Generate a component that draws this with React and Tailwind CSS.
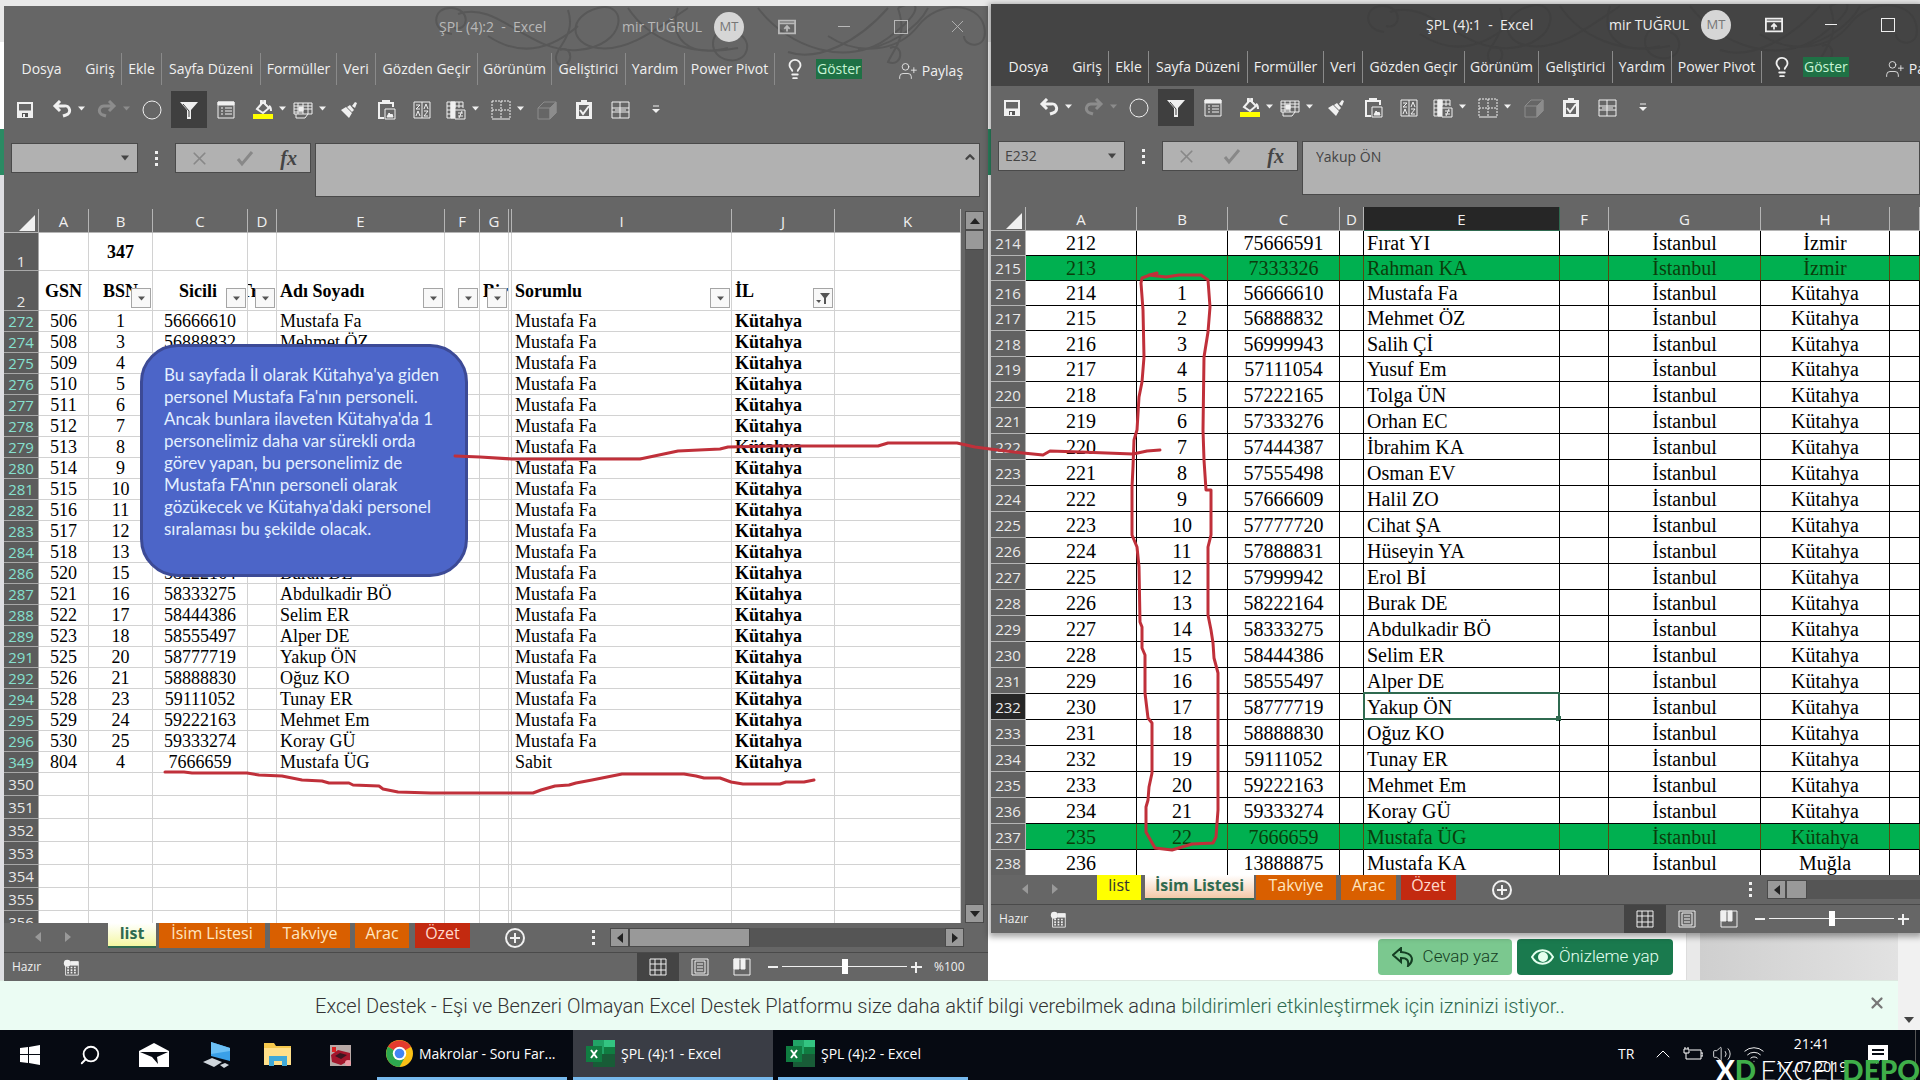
import React, { useState } from "react";
import { ChevronUp, Lightbulb, Search, UserPlus, Volume2, Wifi, X } from "lucide-react";

const MENU = [
  { label: "Dosya", cls: "w-[75px]" },
  { label: "Giriş", cls: "w-[43px] border-r" },
  { label: "Ekle", cls: "w-10 border-r" },
  { label: "Sayfa Düzeni", cls: "w-[99px] border-r" },
  { label: "Formüller", cls: "w-[76px] border-r" },
  { label: "Veri", cls: "w-[39px] border-r" },
  { label: "Gözden Geçir", cls: "w-[102px] border-r" },
  { label: "Görünüm", cls: "w-[74px] border-r" },
  { label: "Geliştirici", cls: "w-[74px] border-r" },
  { label: "Yardım", cls: "w-[59px] border-r" },
  { label: "Power Pivot", cls: "w-[90px] border-r" },
];

const TOOLS = [
  { name: "Kaydet", icon: "save", cls: "w-9" },
  { name: "Geri Al", icon: "undo", cls: "w-8 ml-[3px]", more: true },
  { name: "Yinele", icon: "redo", cls: "w-8 ml-[5px]", more: true, dim: true },
  { name: "Daire", icon: "circle", cls: "w-9 ml-[3px]" },
  { name: "Filtre", icon: "filter", cls: "w-9 ml-px bg-[#3f3f3f]" },
  { name: "Form", icon: "list", cls: "w-9 ml-px" },
  { name: "Dolgu Rengi", icon: "bucket", cls: "w-8 ml-[3px]", more: true },
  { name: "Tablo", icon: "table", cls: "w-8", more: true },
  { name: "Biçim Boyacısı", icon: "brush", cls: "w-9 ml-1" },
  { name: "Yapıştır", icon: "paste", cls: "w-9 ml-px" },
  { name: "Sırala", icon: "sort", cls: "w-9" },
  { name: "Koşullu Biçim", icon: "pivot", cls: "w-8", more: true },
  { name: "Kenarlıklar", icon: "borders", cls: "w-8 ml-[5px]", more: true },
  { name: "Küp", icon: "cube", cls: "w-9 ml-1", dim: true },
  { name: "Denetle", icon: "check", cls: "w-9 ml-px" },
  { name: "Hücreler", icon: "grid", cls: "w-9" },
  { name: "Özelleştir", icon: "custom", cls: "w-9" },
];

const ICONS = {
  save: (
    <>
      <path d="M3 3h14v14H3z" strokeWidth="2" />
      <path d="M3 11h14v6H3z" fill="currentColor" />
      <path d="M7 13h6v4H7z" fill="#555" stroke="none" />
      <path d="M8 14h2v3H8z" fill="currentColor" stroke="none" />
    </>
  ),
  undo: <path d="M4 6h8a4.500 4.500 0 0 1 2 9l-3 1M8 1 3 6l5 5" strokeWidth="3" />,
  redo: <path d="M16 6H8a4.500 4.500 0 0 0-2 9l3 1M12 1l5 5-5 5" strokeWidth="3" />,
  circle: <circle cx="10" cy="10" r="9" />,
  filter: (
    <>
      <path d="M1 2h18l-7 8v9H8v-9z" fill="currentColor" stroke="none" />
      <path d="m4 4 6 7v6" stroke="#3f3f3f" />
    </>
  ),
  list: (
    <>
      <path d="M2 2h16v16H2z" />
      <path d="M2 2h16v3H2z" fill="currentColor" />
      <path d="M5 8h2m2 0h7M5 11h2m2 0h7M5 14h2m2 0h7" />
    </>
  ),
  bucket: (
    <>
      <path d="M4 9 10 2l6 6-6 5zM8 5V1c0-2 4-2 4 0v4" strokeWidth="2" />
      <path d="M16 6c2 1 2 3 2 5" strokeWidth="2" />
      <path d="M0 14h20v5H0z" fill="#ffff00" stroke="none" />
    </>
  ),
  table: (
    <>
      <path d="M1 3h18v11H1zM1 6h18M1 9h18M1 12h9M5 3v11M10 3v11M15 3v11" />
      <path d="M6 7h4v4H6z" fill="currentColor" />
      <path d="M3 14v4h9l3-4" />
    </>
  ),
  brush: (
    <path d="m2 10 5-3 6 6-3 5zM8 7l3-2 4 5-2 2M13 6l3-4 2 1-2 5z" fill="currentColor" stroke="none" />
  ),
  paste: (
    <>
      <path d="M8 18H3V3h14v4M7 3V1h6v2" strokeWidth="2" />
      <path d="M9 9h10v10H9z" />
      <path d="m11 17 2-4 2 2 1-1 1 3z" fill="currentColor" />
    </>
  ),
  sort: (
    <>
      <path d="M2 2h16v16H2zM10 2v16" />
      <path d="M4 5h4L4 9h4M4 16l2-5 2 5M12 9l2-5 2 5M12 11h4l-4 5h4" />
    </>
  ),
  pivot: (
    <>
      <path d="M1 2h16v6M1 2v16h7M1 6h16M1 10h7M1 14h7M5 2v16M9 2v6M13 2v6" />
      <path d="M5 2h4v16H5z" fill="currentColor" />
      <path d="M9 10h10v9H9z" fill="#666" />
      <path d="M12 13h5M12 16h5M16 11l-3 7" />
    </>
  ),
  borders: (
    <>
      <path d="M1 1h18v17M1 1v17M10 1v17M1 10h18" strokeDasharray="2 1" />
      <path d="M1 19h18" />
    </>
  ),
  cube: (
    <>
      <path d="M1 8h12v11H1zM1 8l6-6h12l-6 6M19 2v11l-6 6" />
      <path d="M13 8l6-6v11l-6 6z" fill="currentColor" />
    </>
  ),
  check: (
    <>
      <path d="M2 2h16v17H2z" fill="currentColor" stroke="none" />
      <path d="M5 5h10v11H5z" fill="#666" stroke="none" />
      <path d="M7 0h6v4H7z" fill="currentColor" stroke="none" />
      <path d="m6 10 3 4 6-8" strokeWidth="2" />
    </>
  ),
  grid: <path d="M2 2h17v16H2zM2 8h17M2 12h17M10 2v16M5 10h11" />,
  custom: (
    <>
      <path d="M7 6h6" strokeWidth="1" />
      <path d="M6 9h8l-4 4z" fill="currentColor" stroke="none" />
    </>
  ),
  normal: <path d="M2 2h16v16H2zM2 7h16M2 13h16M7 2v16M13 2v16" />,
  page: <path d="M2 2h16v16H2zM5 4h10v12H5zM7 7h6M7 10h6M7 13h6" />,
  breaks: (
    <>
      <path d="M2 2h16v16H2z" />
      <path d="M2 2h5v10H2zM9 2h4v10H9z" fill="currentColor" />
    </>
  ),
  ribbon: (
    <>
      <path d="M1 3h18v14H1zM1 6h18M10 15V9M7 12l3-3 3 3" strokeWidth="2" />
    </>
  ),
  macro: (
    <>
      <path d="M3 7h15v12H3z" />
      <path d="M9 3h9v4H9z" fill="currentColor" />
      <path d="M5 10h11M5 13h11M5 16h11" strokeDasharray="2 2" strokeWidth="2" />
      <circle cx="5" cy="5" r="4" fill="currentColor" stroke="none" />
    </>
  ),
};

const Icon = ({ name, size = 20 }) => (
  <svg
    width={size}
    height={size}
    viewBox="0 0 20 20"
    fill="none"
    stroke="currentColor"
    aria-hidden="true"
    className="shrink-0"
  >
    {ICONS[name]}
  </svg>
);

const Triangle = ({ dir = "down", className = "" }) => {
  const paths = {
    down: "M0 2h10L5 8z",
    up: "M0 8h10L5 2z",
    left: "M8 0v10L2 5z",
    right: "M2 0v10l6-5z",
  };
  return (
    <svg viewBox="0 0 10 10" fill="currentColor" className={`shrink-0 ${className}`} aria-hidden="true">
      <path d={paths[dir]} />
    </svg>
  );
};

const Swirls = ({ active }) => (
  <svg
    width="560"
    height="62"
    viewBox="0 0 560 62"
    fill="none"
    strokeWidth="2"
    className={`absolute right-0 top-0 ${active ? "stroke-[#404040]" : "stroke-[#585858]"}`}
    aria-hidden="true"
  >
    <path d="M24 28c-22-2-20-28 0-26s16 24 2 20M30 8c40-14 70 40 120 36s50-50 20-42-30 36 0 40 60-20 90-40" />
    <path d="M60 30c30 20 60 16 90-10M140 4c10 30-20 40-10 54 16 6 16-20 2-14M200 2c20 30 60 50 110 40M250 2c-10 30 10 50 50 40" />
    <path d="M300 20c-20 6-20 30 0 34s26-20 10-26M330 2c30 40 90 60 130 30s30-40 10-30M360 46c30 10 70-10 100-44" />
    <path d="M400 30c30 20 70 16 90-10s60-24 66 0-20 22-20 10M470 2c10 30-4 40-10 54 16 6 16-20 2-14M500 2c-10 20-40 40-70 42" />
  </svg>
);

const ScrollButton = ({ dir }) => (
  <button
    type="button"
    aria-label={`Kaydır ${dir}`}
    className="flex size-[19px] shrink-0 items-center justify-center border border-[#4a4a4a] bg-[#999] text-[#222]"
  >
    <Triangle dir={dir} className="size-[10px]" />
  </button>
);

const ExcelWindow = ({
  title,
  active,
  className,
  cell,
  formula,
  tabs,
  tabsPad,
  gapAfterTabs,
  gapBeforeScroll,
  vertical,
  thumb,
  tailPad,
  zoomed,
  children,
}) => {
  const [zoom, setZoom] = useState(100);
  const [name, setName] = useState(cell);
  const [text, setText] = useState(formula);
  const bar = active ? "bg-[#444]" : "bg-[#666]";

  return (
    <section
      className={`absolute flex flex-col overflow-hidden bg-[#666] font-['Open_Sans','Noto_Sans',sans-serif] text-[#f0f0f0] ${className}`}
    >
      <header className={`relative shrink-0 ${bar}`}>
        <Swirls active={active} />
        <div
          className={`relative flex h-[47px] items-center pb-[6px] pl-[435px] text-sm ${active ? "text-[#eee]" : "text-[#b8b8b8]"}`}
        >
          <h1 className="w-[183px] shrink-0 whitespace-pre">{title}{"  -  Excel"}</h1>
          <span className="w-[92px] shrink-0 whitespace-nowrap">mir TUĞRUL</span>
          <span className="flex size-[30px] shrink-0 items-center justify-center rounded-full bg-[#d6d6d6] text-[13px] text-[#777]">
            MT
          </span>
          <div className="ml-[14px] flex">
            <button type="button" aria-label="Şerit" className="flex h-8 w-[57px] items-center justify-center">
              <Icon name="ribbon" size={18} />
            </button>
            <button type="button" aria-label="Küçült" className="flex h-8 w-[57px] items-center justify-center">
              <span className="h-px w-3 bg-current" />
            </button>
            <button type="button" aria-label="Büyüt" className="flex h-8 w-[57px] items-center justify-center">
              <span className="size-[14px] border border-current" />
            </button>
            <button type="button" aria-label="Kapat" className="flex h-8 w-[57px] items-center justify-center">
              <X size={21} strokeWidth={1} />
            </button>
          </div>
        </div>
        <nav className="relative flex h-[35px] items-start text-sm leading-8">
          {MENU.map((m) => (
            <button
              type="button"
              key={m.label}
              className={`h-8 shrink-0 whitespace-nowrap border-[#8a8a8a] text-center ${m.cls}`}
            >
              {m.label}
            </button>
          ))}
          <Lightbulb size={22} strokeWidth={2} className="ml-[9px] mt-[5px] shrink-0" />
          <button type="button" className="ml-[10px] mt-[6px] h-5 shrink-0 bg-[#1f7145] px-px text-sm leading-5 text-[#c8f5d6]">
            Göster
          </button>
          <button type="button" className="ml-[36px] flex h-9 shrink-0 items-center gap-1">
            <UserPlus size={20} strokeWidth={1} />
            Paylaş
          </button>
        </nav>
      </header>

      <div className="flex h-[55px] shrink-0 items-start pl-[3px] pt-[3px]">
        {TOOLS.map((t) => (
          <React.Fragment key={t.icon}>
            <button
              type="button"
              aria-label={t.name}
              className={`flex h-[37px] shrink-0 items-center justify-center ${t.cls} ${t.dim ? "text-[#8c8c8c]" : ""}`}
            >
              <Icon name={t.icon} />
            </button>
            {t.more && (
              <button
                type="button"
                aria-label={`${t.name} seçenekleri`}
                className={`flex h-[35px] w-2 shrink-0 items-center ${t.dim ? "text-[#8c8c8c]" : ""}`}
              >
                <Triangle className="size-[7px]" />
              </button>
            )}
          </React.Fragment>
        ))}
      </div>

      <div className="flex h-[54px] shrink-0 items-start pl-[7px]">
        <div className="flex h-[30px] w-[127px] shrink-0 items-center border border-[#4a4a4a] bg-[#b1b1b1] pr-2 text-[#444]">
          <input
            aria-label="Ad Kutusu"
            value={name}
            onChange={(e) => setName(e.target.value)}
            className="w-0 flex-1 bg-transparent px-[6px] text-sm outline-none"
          />
          <Triangle className="size-2" />
        </div>
        <div className="ml-[17px] flex h-[30px] w-1 shrink-0 flex-col justify-center gap-[3px]">
          <i className="size-[3px] bg-[#f0f0f0]" />
          <i className="size-[3px] bg-[#f0f0f0]" />
          <i className="size-[3px] bg-[#f0f0f0]" />
        </div>
        <div className="ml-4 flex h-[30px] w-[136px] shrink-0 items-center justify-around border border-[#4a4a4a] bg-[#b1b1b1] text-[#888]">
          <button type="button" aria-label="İptal">
            <X size={21} strokeWidth={2} />
          </button>
          <button type="button" aria-label="Gir">
            <svg width="18" height="18" viewBox="0 0 18 18" fill="none" stroke="currentColor" strokeWidth="3">
              <path d="m2 10 4 5L16 3" />
            </svg>
          </button>
          <button type="button" aria-label="İşlev Ekle" className="font-['Liberation_Serif',serif] text-xl font-bold italic leading-5 text-[#444]">
            fx
          </button>
        </div>
        <div className="ml-1 flex h-[54px] flex-1 items-start border border-[#4a4a4a] bg-[#b1b1b1] text-[#444]">
          <input
            aria-label="Formül Çubuğu"
            value={text}
            onChange={(e) => setText(e.target.value)}
            className="h-7 w-0 flex-1 bg-transparent pl-[13px] text-sm outline-none"
          />
          {!active && <ChevronUp size={14} strokeWidth={4} className="mr-[2px] mt-[6px]" />}
        </div>
        {!active && <div className="w-2 shrink-0" />}
      </div>

      <div className="mt-3 flex min-h-0 flex-1">
        <div className="min-w-0 flex-1 overflow-hidden">{children}</div>
        {vertical && (
          <div className="flex w-[27px] shrink-0 justify-center pt-[2px]">
            <div className="flex w-[19px] flex-col bg-[#555]">
              <ScrollButton dir="up" />
              <div className="h-5 border border-[#4a4a4a] bg-[#999]" />
              <div className="flex-1" />
              <ScrollButton dir="down" />
            </div>
          </div>
        )}
      </div>

      <div className={`flex h-[29px] shrink-0 items-start ${tailPad}`}>
        <div className={`flex h-7 shrink-0 items-center gap-5 pl-[29px] text-[#999] ${tabsPad}`}>
          <Triangle dir="left" className="size-[10px]" />
          <Triangle dir="right" className="size-[10px]" />
        </div>
        {tabs.map((t) => (
          <button
            type="button"
            key={t.label}
            className={`flex h-[25px] shrink-0 items-start justify-center whitespace-nowrap text-base leading-5 ${t.cls}`}
          >
            {t.label}
          </button>
        ))}
        <button
          type="button"
          aria-label="Yeni sayfa"
          className={`mt-[5px] flex size-5 shrink-0 items-center justify-center rounded-full border-2 border-[#f0f0f0] ${gapAfterTabs}`}
        >
          <svg width="12" height="12" viewBox="0 0 12 12" stroke="currentColor" strokeWidth="2">
            <path d="M6 1v10M1 6h10" />
          </svg>
        </button>
        <div className={`flex h-7 w-1 shrink-0 flex-col justify-center gap-[3px] ${gapBeforeScroll}`}>
          <i className="size-[3px] bg-[#f0f0f0]" />
          <i className="size-[3px] bg-[#f0f0f0]" />
          <i className="size-[3px] bg-[#f0f0f0]" />
        </div>
        <div className="ml-[14px] mt-[5px] flex flex-1 bg-[#555]">
          <ScrollButton dir="left" />
          <div className={`h-[19px] border border-[#4a4a4a] bg-[#999] ${thumb}`} />
          <div className="flex-1" />
          {vertical && <ScrollButton dir="right" />}
        </div>
      </div>

      <footer className="flex h-[29px] shrink-0 items-stretch border-t border-[#4a4a4a] text-xs">
        <span className="w-[59px] shrink-0 self-center pl-2">Hazır</span>
        <button type="button" aria-label="Makro kaydet" className="shrink-0">
          <Icon name="macro" size={17} />
        </button>
        <div className="w-[557px] shrink-0" />
        <button type="button" aria-label="Normal" className="flex w-[42px] shrink-0 items-center justify-center bg-[#444]">
          <Icon name="normal" />
        </button>
        <button type="button" aria-label="Sayfa Düzeni" className="flex w-[42px] shrink-0 items-center justify-center">
          <Icon name="page" />
        </button>
        <button type="button" aria-label="Sayfa Sonu" className="flex w-[42px] shrink-0 items-center justify-center">
          <Icon name="breaks" />
        </button>
        <button type="button" aria-label="Uzaklaştır" className="flex w-[19px] shrink-0 items-center justify-center">
          <span className="h-[2px] w-[10px] bg-[#f0f0f0]" />
        </button>
        <input
          type="range"
          min="0"
          max="200"
          value={zoom}
          onChange={(e) => setZoom(Number(e.target.value))}
          aria-label="Yakınlaştırma"
          className="h-[27px] w-[125px] shrink-0 appearance-none bg-[linear-gradient(#f0f0f0,#f0f0f0)] bg-[length:100%_1px] bg-center bg-no-repeat [&::-webkit-slider-thumb]:h-[15px] [&::-webkit-slider-thumb]:w-[6px] [&::-webkit-slider-thumb]:appearance-none [&::-webkit-slider-thumb]:bg-white"
        />
        <button type="button" aria-label="Yakınlaştır" className="flex w-[19px] shrink-0 items-center justify-center">
          <svg width="11" height="11" viewBox="0 0 11 11" stroke="currentColor" strokeWidth="2">
            <path d="M5 0v11M0 5h11" />
          </svg>
        </button>
        {zoomed && <span className="ml-2 self-center whitespace-nowrap">%100</span>}
      </footer>
    </section>
  );
};

const LEFT_ROWS = [
  [272, 506, 1, "56666610", "Mustafa Fa"],
  [274, 508, 3, "56888832", "Mehmet ÖZ"],
  [275, 509, 4, "56999943", "Salih Çİ"],
  [276, 510, 5, "57111054", "Yusuf Em"],
  [277, 511, 6, "57222165", "Tolga ÜN"],
  [278, 512, 7, "57333276", "Orhan EC"],
  [279, 513, 8, "57444387", "İbrahim KA"],
  [280, 514, 9, "57555498", "Osman EV"],
  [281, 515, 10, "57666609", "Halil ZO"],
  [282, 516, 11, "57777720", "Cihat ŞA"],
  [283, 517, 12, "57888831", "Hüseyin YA"],
  [284, 518, 13, "57999942", "Erol Bİ"],
  [286, 520, 15, "58222164", "Burak DE"],
  [287, 521, 16, "58333275", "Abdulkadir BÖ"],
  [288, 522, 17, "58444386", "Selim ER"],
  [289, 523, 18, "58555497", "Alper DE"],
  [291, 525, 20, "58777719", "Yakup ÖN"],
  [292, 526, 21, "58888830", "Oğuz KO"],
  [294, 528, 23, "59111052", "Tunay ER"],
  [295, 529, 24, "59222163", "Mehmet Em"],
  [296, 530, 25, "59333274", "Koray GÜ"],
  [349, 804, 4, "7666659", "Mustafa ÜG"],
];

const EMPTY_ROWS = [350, 351, 352, 353, 354, 355, 356];

const RIGHT_ROWS = [
  [214, 212, "", "75666591", "Fırat YI", "İzmir"],
  [215, 213, "", "7333326", "Rahman KA", "İzmir"],
  [216, 214, 1, "56666610", "Mustafa Fa", "Kütahya"],
  [217, 215, 2, "56888832", "Mehmet ÖZ", "Kütahya"],
  [218, 216, 3, "56999943", "Salih Çİ", "Kütahya"],
  [219, 217, 4, "57111054", "Yusuf Em", "Kütahya"],
  [220, 218, 5, "57222165", "Tolga ÜN", "Kütahya"],
  [221, 219, 6, "57333276", "Orhan EC", "Kütahya"],
  [222, 220, 7, "57444387", "İbrahim KA", "Kütahya"],
  [223, 221, 8, "57555498", "Osman EV", "Kütahya"],
  [224, 222, 9, "57666609", "Halil ZO", "Kütahya"],
  [225, 223, 10, "57777720", "Cihat ŞA", "Kütahya"],
  [226, 224, 11, "57888831", "Hüseyin YA", "Kütahya"],
  [227, 225, 12, "57999942", "Erol Bİ", "Kütahya"],
  [228, 226, 13, "58222164", "Burak DE", "Kütahya"],
  [229, 227, 14, "58333275", "Abdulkadir BÖ", "Kütahya"],
  [230, 228, 15, "58444386", "Selim ER", "Kütahya"],
  [231, 229, 16, "58555497", "Alper DE", "Kütahya"],
  [232, 230, 17, "58777719", "Yakup ÖN", "Kütahya"],
  [233, 231, 18, "58888830", "Oğuz KO", "Kütahya"],
  [234, 232, 19, "59111052", "Tunay ER", "Kütahya"],
  [235, 233, 20, "59222163", "Mehmet Em", "Kütahya"],
  [236, 234, 21, "59333274", "Koray GÜ", "Kütahya"],
  [237, 235, 22, "7666659", "Mustafa ÜG", "Kütahya"],
  [238, 236, "", "13888875", "Mustafa KA", "Muğla"],
];

const SHORT_ROWS = [214, 215, 216, 217, 219];

const Corner = () => (
  <th className="border-b border-r border-[#b5b5b5]">
    <svg viewBox="0 0 16 16" className="ml-auto mr-[3px] mt-1 size-4" fill="#f0f0f0" aria-hidden="true">
      <path d="M16 0v16H0z" />
    </svg>
  </th>
);

const FilterButton = ({ on }) => (
  <button
    type="button"
    aria-label="Süz"
    className="absolute bottom-[2px] right-px flex size-5 items-center justify-center border border-[#a5a5a5] bg-[#f8f8f8] text-[#555]"
  >
    {on ? (
      <svg width="14" height="14" viewBox="0 0 14 14" fill="currentColor">
        <path d="M4 2h10l-4 5v6H8V7zM0 9h5l-2 3z" />
      </svg>
    ) : (
      <Triangle className="size-[7px]" />
    )}
  </button>
);

const LEFT_HEADS = [
  { text: "GSN", cls: "text-center" },
  { text: "BSN", cls: "text-center", filter: true },
  { text: "Sicili", cls: "pr-1 text-center", filter: true },
  { text: "Tr", cls: "-indent-2 overflow-hidden text-left", filter: true },
  { text: "Adı Soyadı", cls: "pl-[3px] text-left", filter: true },
  { text: "", cls: "", filter: true },
  { text: "Bir", cls: "text-right", filter: true },
  { text: "", cls: "" },
  { text: "Sorumlu", cls: "pl-[3px] text-left", filter: true },
  { text: "İL", cls: "pl-[3px] text-left", filter: true, on: true },
  { text: "", cls: "" },
];

const LeftSheet = () => {
  const td = "border-b border-r border-[#d2d2d2] p-0";
  const rowHead = "border-b border-r border-[#a8a8a8] bg-[#5c5c5c] p-0 text-center font-['Open_Sans',sans-serif] text-[15px] font-normal leading-[18px]";
  return (
    <table className="w-full table-fixed border-separate border-spacing-0 bg-white font-['Liberation_Serif',serif] text-lg leading-5 text-black">
      <colgroup>
        <col className="w-[35px]" />
        <col className="w-[50px]" />
        <col className="w-16" />
        <col className="w-[95px]" />
        <col className="w-[29px]" />
        <col className="w-[168px]" />
        <col className="w-[35px]" />
        <col className="w-[29px]" />
        <col className="w-[3px]" />
        <col className="w-[220px]" />
        <col className="w-[103px]" />
        <col />
      </colgroup>
      <thead>
        <tr className="h-6 bg-[#666] font-['Open_Sans',sans-serif] text-[15px] text-[#f0f0f0]">
          <Corner />
          {["A", "B", "C", "D", "E", "F", "G", "", "I", "J", "K"].map((c, i) => (
            <th key={i} className={`border-b border-r border-[#b5b5b5] p-0 font-normal ${c === "K" ? "pl-5" : ""}`}>
              {c}
            </th>
          ))}
        </tr>
      </thead>
      <tbody>
        <tr className="h-[38px]">
          <th className={`${rowHead} align-bottom text-[#e8e8e8]`}>1</th>
          <td className={td} />
          <td className={`${td} text-center font-bold`}>347</td>
          {[1, 2, 3, 4, 5, 6, 7, 8, 9].map((i) => (
            <td key={i} className={td} />
          ))}
        </tr>
        <tr className="h-10">
          <th className={`${rowHead} align-bottom text-[#e8e8e8]`}>2</th>
          {LEFT_HEADS.map((h, i) => (
            <td key={i} className={`relative font-bold ${td} ${h.cls}`}>
              {h.text}
              {h.filter && <FilterButton on={h.on} />}
            </td>
          ))}
        </tr>
        {LEFT_ROWS.map(([n, gsn, bsn, sicil, ad]) => (
          <tr key={n} className="h-[21px]">
            <th className={`${rowHead} text-[#86e0cf]`}>{n}</th>
            <td className={`${td} text-center`}>{gsn}</td>
            <td className={`${td} text-center`}>{bsn}</td>
            <td className={`${td} text-center`}>{sicil}</td>
            <td className={td} />
            <td className={`${td} pl-[3px]`}>{ad}</td>
            <td className={td} />
            <td className={td} />
            <td className={td} />
            <td className={`${td} pl-[3px]`}>{n === 349 ? "Sabit" : "Mustafa Fa"}</td>
            <td className={`${td} pl-[3px] font-bold`}>Kütahya</td>
            <td className={td} />
          </tr>
        ))}
        {EMPTY_ROWS.map((n) => (
          <tr key={n} className="h-[23px]">
            <th className={`${rowHead} text-[#e8e8e8]`}>{n}</th>
            {[1, 2, 3, 4, 5, 6, 7, 8, 9, 10, 11].map((i) => (
              <td key={i} className={td} />
            ))}
          </tr>
        ))}
      </tbody>
    </table>
  );
};

const RightSheet = () => (
  <table className="w-full table-fixed border-separate border-spacing-0 bg-white font-['Liberation_Serif',serif] text-xl leading-6 text-black">
    <colgroup>
      <col className="w-[35px]" />
      <col className="w-[111px]" />
      <col className="w-[91px]" />
      <col className="w-28" />
      <col className="w-6" />
      <col className="w-[196px]" />
      <col className="w-[49px]" />
      <col className="w-[152px]" />
      <col className="w-[129px]" />
      <col />
    </colgroup>
    <thead>
      <tr className="h-6 bg-[#666] font-['Open_Sans',sans-serif] text-[15px] text-[#f0f0f0]">
        <Corner />
        {["A", "B", "C", "D", "E", "F", "G", "H", ""].map((c) => (
          <th
            key={c}
            className={`border-b border-r p-0 font-normal leading-5 ${c === "E" ? "border-[#2f6a50] bg-[#262626]" : "border-[#b5b5b5]"}`}
          >
            {c}
          </th>
        ))}
      </tr>
    </thead>
    <tbody>
      {RIGHT_ROWS.map(([n, gsn, bsn, sicil, ad, il]) => {
        const green = n === 215 || n === 237;
        const selected = n === 232;
        const td = `border-b border-r border-black p-0 ${green ? "border-r-[#5a4a10]" : ""}`;
        return (
          <tr
            key={n}
            className={`${SHORT_ROWS.includes(n) ? "h-[25px]" : "h-[26px]"} ${green ? "bg-[#00b050] text-[#0b3d0b]" : ""}`}
          >
            <th
              className={`border-b border-r border-[#b5b5b5] p-0 text-center font-['Open_Sans',sans-serif] text-[15px] font-normal text-[#e8e8e8] ${selected ? "bg-[#262626]" : "bg-[#626262]"}`}
            >
              {n}
            </th>
            <td className={`${td} text-center`}>{gsn}</td>
            <td className={`${td} text-center`}>{bsn}</td>
            <td className={`${td} text-center`}>{sicil}</td>
            <td className={td} />
            <td className={`${td} relative pl-[3px]`}>
              {ad}
              {selected && (
                <span className="absolute -bottom-px -left-px -right-px -top-[2px] border-2 border-[#2f6a50]">
                  <i className="absolute -bottom-[3px] -right-[3px] size-[5px] bg-[#2f6a50]" />
                </span>
              )}
            </td>
            <td className={td} />
            <td className={`${td} text-center`}>İstanbul</td>
            <td className={`${td} text-center`}>{il}</td>
            <td className={td} />
          </tr>
        );
      })}
    </tbody>
  </table>
);

const orange = "bg-[#d95f00] text-[#ffe6c0]";

const LEFT_TABS = [
  {
    label: "list",
    cls: "w-12 border-b-2 border-[#2f6a50] bg-gradient-to-b from-white to-[#f4f7a0] font-bold text-[#2f6a50]",
  },
  { label: "İsim Listesi", cls: `ml-[3px] w-[106px] ${orange}` },
  { label: "Takviye", cls: `ml-[5px] w-20 ${orange}` },
  { label: "Arac", cls: `ml-[5px] w-[54px] ${orange}` },
  { label: "Özet", cls: "ml-[6px] w-[55px] bg-[#c32a10] text-[#ffd9cc]" },
];

const RIGHT_TABS = [
  { label: "list", cls: "w-11 bg-[#ffff00] text-[#333]" },
  {
    label: "İsim Listesi",
    cls: "ml-1 w-[109px] border-b-2 border-[#2f6a50] bg-gradient-to-b from-white to-[#f3c9a8] font-bold text-[#2f6a50]",
  },
  { label: "Takviye", cls: `ml-[2px] w-20 ${orange}` },
  { label: "Arac", cls: `ml-[5px] w-[55px] ${orange}` },
  { label: "Özet", cls: "ml-[5px] w-[55px] bg-[#c32a10] text-[#ffd9cc]" },
];

// Red pen marks drawn over both windows
const PenMarks = () => (
  <svg
    width="1920"
    height="1080"
    viewBox="0 0 1920 1080"
    fill="none"
    stroke="#c0303a"
    strokeWidth="3"
    strokeLinecap="round"
    strokeLinejoin="round"
    className="pointer-events-none absolute left-0 top-0"
    aria-hidden="true"
  >
    <path d="M165 772h19l8 1h55l12 2 23 1 20 4 20 1 7 2h20l4 2 26 1 4 3 15 3 33 1h102l8-3 14-4 14-1 7-2 16-3 30-6h62l12 2 8 2h16l11 4 12 2h37l6-2h18l10-2" />
    <path d="m455 456 25 1 32 2h128l38-8 42-2 8-2 46-1h104l10-3h69l18 4 15 2 33 4 20 2 7-4 30 1 53 2 14-3 13-1" />
    <path d="m1157 273-7 2-8 3-1 5 2 27 1 47-2 25-3 15-2 33-3 10-1 27-1 20v48l5 12 2 20 1 55 2 5v21l3 7v38l3 25 4 5v50l-3 14-1 13-2 7v25l9 16 17 2 20-6 21-1 3-6 2-27V673l-4-15-1-15-2-13-3-15v-68l3-12v-45h-5l-2-30-1-30 1-73 4-25 2-25-2-27-7-5h-22l-13 2-17-2" />
  </svg>
);

const ExcelLogo = () => (
  <svg width="29" height="28" viewBox="0 0 29 28" className="shrink-0" aria-hidden="true">
    <path d="M7 0h11v14H7z" fill="#21a366" />
    <path d="M18 0h11v7H18z" fill="#33c481" />
    <path d="M18 7h11v7H18z" fill="#107c41" />
    <path d="M7 14h22v13H7z" fill="#185c37" />
    <path d="M0 6h16v16H0z" fill="#107c41" />
    <path d="m5 10 6 8M11 10l-6 8" stroke="#fff" strokeWidth="2" />
  </svg>
);

const ChromeLogo = () => (
  <svg width="27" height="27" viewBox="0 0 28 28" className="shrink-0" aria-hidden="true">
    <circle cx="14" cy="14" r="14" fill="#fbc116" />
    <path d="M14 14 2 7a14 14 0 0 1 24 0z" fill="#e33b2e" />
    <path d="M14 14 2 7a14 14 0 0 0 12 21l6-11z" fill="#2da94f" />
    <circle cx="14" cy="14" r="7" fill="#fff" />
    <circle cx="14" cy="14" r="5" fill="#4285f4" />
  </svg>
);

const TaskItem = ({ icon, label, className, active }) => (
  <button
    type="button"
    className={`flex h-full shrink-0 items-center gap-[6px] border-b-[3px] border-[#76b9ed] text-left text-sm text-white ${active ? "bg-[#3a3d45]" : ""} ${className}`}
  >
    {icon}
    <span className="whitespace-nowrap">{label}</span>
  </button>
);

const Taskbar = () => (
  <footer className="relative flex h-[50px] shrink-0 items-stretch overflow-hidden bg-[#060a12] font-['Open_Sans','Noto_Sans',sans-serif] text-white">
    <button type="button" aria-label="Başlat" className="flex w-[60px] shrink-0 items-center justify-center">
      <svg width="20" height="20" viewBox="0 0 20 20" fill="#fff">
        <path d="m0 3 8-1v7H0zM9 2l11-2v9H9zM0 10h8v8l-8-1zM9 10h11v10L9 18z" />
      </svg>
    </button>
    <button type="button" aria-label="Ara" className="flex w-[60px] shrink-0 items-center justify-center">
      <Search size={22} strokeWidth={2} className="-scale-x-100" />
    </button>
    <button type="button" aria-label="Posta" className="flex w-[68px] shrink-0 items-center justify-center">
      <svg width="30" height="24" viewBox="0 0 30 24">
        <path d="M0 8 15 0l15 8v16H0z" fill="#fff" />
        <path d="m1 9 28 0-11 5 1 7-6-7z" fill="#060a12" />
      </svg>
    </button>
    <button type="button" aria-label="Bilgisayar" className="flex w-[58px] shrink-0 items-center justify-center">
      <svg width="28" height="26" viewBox="0 0 28 26">
        <path d="m8 0 19 6v13L8 14z" fill="#3aa0e8" />
        <path d="m8 0 19 6v3L8 12z" fill="#6cc0f5" />
        <path d="m0 20 9-4 10 4-8 5z" fill="#cfd6dc" />
        <path d="m17 23 5-2 4 2-5 3z" fill="#cfd6dc" />
      </svg>
    </button>
    <button type="button" aria-label="Dosya Gezgini" className="flex w-16 shrink-0 items-center justify-center">
      <svg width="28" height="24" viewBox="0 0 28 24">
        <path d="M0 0h10l2 3h15v19H0z" fill="#f5c84c" />
        <path d="M3 5h24v17H0V5z" fill="#ffe08a" />
        <path d="M5 13h18v10h-5v-5h-8v5H5z" fill="#3fa9d8" />
      </svg>
    </button>
    <button type="button" aria-label="Oyun" className="flex w-[60px] shrink-0 items-center justify-center">
      <svg width="21" height="21" viewBox="0 0 21 21">
        <path d="M0 0h21v21H0z" fill="#b8a9a6" />
        <path d="M1 10 8 5l12 3v7l-9 5-9-3z" fill="#a3172c" />
        <path d="m5 11 5-3 7 2-6 4z" fill="#3a1620" />
        <path d="M2 2h4v5H2z" fill="#d22" />
        <circle cx="18" cy="18" r="3" fill="#ee9aa5" />
      </svg>
    </button>
    <TaskItem className="ml-[7px] w-[190px] pl-[9px]" icon={<ChromeLogo />} label="Makrolar - Soru Far..." />
    <TaskItem className="ml-[6px] w-[200px] pl-[13px]" active icon={<ExcelLogo />} label="ŞPL (4):1 - Excel" />
    <TaskItem className="ml-[5px] w-[190px] pl-2" icon={<ExcelLogo />} label="ŞPL (4):2 - Excel" />
    <div className="flex-1" />
    <div className="flex shrink-0 items-center pb-[2px]">
      <span className="w-[33px] text-sm">TR</span>
      <ChevronUp size={24} strokeWidth={1} />
      <svg width="20" height="14" viewBox="0 0 20 14" fill="none" stroke="#fff" className="ml-[8px]">
        <path d="M7 3h11v9H7M18 6h2v3h-2M1 2h5v4H1zM2 0v2M5 0v2M3 6v6h4" />
      </svg>
      <Volume2 size={20} strokeWidth={1} className="ml-[9px]" />
      <Wifi size={22} strokeWidth={1} className="ml-[11px]" />
    </div>
    <div className="w-[97px] shrink-0 pr-1 pt-[2px] text-center text-sm leading-[23px]">
      <div>21:41</div>
      <div>17.07.2019</div>
    </div>
    <div className="w-[54px] shrink-0 border-r border-[#555] pt-[15px]">
      <svg width="20" height="20" viewBox="0 0 20 20" className="ml-[6px]">
        <path d="M0 0h20v15h-8l-4 4v-4H0z" fill="#fff" />
        <path d="M4 5h12M4 9h12" stroke="#060a12" strokeWidth="2" />
      </svg>
    </div>
    <div className="w-1 shrink-0" />
    <div className="absolute -bottom-[6px] right-0 flex items-end font-['Lato',sans-serif] text-[28px] leading-8">
      <span className="font-black text-white">X</span>
      <span className="mr-1 font-black text-[#3fae49]">D</span>
      <span className="font-light text-white">EXCEL</span>
      <span className="font-black text-[#3fae49]">DEPO</span>
    </div>
  </footer>
);

const App = () => {
  const [notice, setNotice] = useState(true);

  return (
    <div className="relative flex h-screen flex-col overflow-hidden bg-[#e9e9e9]">
      {/* forum page behind the windows */}
      <main className="flex min-h-0 flex-1 flex-col font-['Roboto',sans-serif]">
        <div className="h-[42px] shrink-0" />
        <div className="h-[87px] shrink-0 bg-white" />
        <div className="h-[46px] shrink-0 bg-[#2b8a63]" />
        <div className="flex min-h-0 flex-1">
          <div className="w-[988px] shrink-0 bg-[#dedee2]" />
          <div className="flex flex-1 items-end justify-end border-r border-[#ddd] bg-white pb-[5px] pr-[13px]">
            <button
              type="button"
              className="mr-[5px] flex h-9 w-[134px] items-center justify-center gap-2 rounded bg-[#7bc88f] text-[17px] font-light text-[#143d22]"
            >
              <svg width="23" height="20" viewBox="0 0 23 20" fill="none" stroke="currentColor" strokeWidth="2">
                <path d="M9 1 1 8l8 7v-4c6 0 8 2 7 8 6-5 6-13-7-14z" />
              </svg>
              Cevap yaz
            </button>
            <button
              type="button"
              className="flex h-9 w-[156px] items-center justify-center gap-[5px] rounded bg-[#1a7a4e] text-[17px] font-light text-[#e4ffee]"
            >
              <svg width="23" height="16" viewBox="0 0 23 16" fill="none" stroke="currentColor" strokeWidth="2">
                <path d="M1 8c5-9 16-9 21 0-5 9-16 9-21 0z" />
                <circle cx="12" cy="8" r="4" fill="currentColor" />
              </svg>
              Önizleme yap
            </button>
          </div>
          <div className="ml-[13px] w-[198px] shrink-0 bg-gradient-to-r from-[#cfcfcf] to-[#e2e2e2]" />
          <div className="w-[22px] shrink-0 bg-[#f1f1f1]" />
        </div>
        {notice && (
          <div className="flex h-[50px] shrink-0">
            <div className="flex flex-1 items-center border-t border-[#dde8e0] bg-[#ebfcf3] pr-3">
              <p className="flex-1 pl-3 text-center text-xl font-light text-[#333]">
                Excel Destek - Eşi ve Benzeri Olmayan Excel Destek Platformu size daha aktif bilgi verebilmek adına{" "}
                <a href="#izin" className="text-[#2f6a50]">
                  bildirimleri etkinleştirmek için izninizi istiyor..
                </a>
              </p>
              <button type="button" aria-label="Kapat" onClick={() => setNotice(false)} className="mb-[6px] text-[#777]">
                <X size={18} strokeWidth={3} />
              </button>
            </div>
            <div className="flex w-[22px] shrink-0 items-end justify-center bg-[#f1f1f1] pb-[5px] text-[#444]">
              <Triangle className="size-[10px]" />
            </div>
          </div>
        )}
      </main>

      <ExcelWindow
        title="ŞPL (4):2"
        className="bottom-[99px] left-1 top-[6px] w-[984px]"
        cell=""
        formula=""
        tabs={LEFT_TABS}
        tabsPad="w-[104px]"
        gapAfterTabs="ml-[35px]"
        gapBeforeScroll="ml-[67px]"
        thumb="w-[121px]"
        tailPad="pr-6"
        vertical
        zoomed
      >
        <LeftSheet />
      </ExcelWindow>

      <ExcelWindow
        active
        title="ŞPL (4):1"
        className="bottom-[147px] left-[991px] right-0 top-1 shadow-[0_2px_6px_2px_rgba(0,0,0,0.35)]"
        cell="E232"
        formula="Yakup ÖN"
        tabs={RIGHT_TABS}
        tabsPad="w-[106px]"
        gapAfterTabs="ml-[36px]"
        gapBeforeScroll="ml-[237px]"
        thumb="w-[21px]"
        tailPad=""
      >
        <RightSheet />
      </ExcelWindow>

      <aside className="absolute left-[140px] top-[344px] h-[233px] w-[328px] rounded-[38px] border-[3px] border-[#3c4a96] bg-[#4c65c8] pl-[21px] pt-[17px] font-['Lato',sans-serif] text-[17px] leading-[22px] text-[#e3f0ff]">
        <p className="whitespace-pre-line">
          {`Bu sayfada İl olarak Kütahya'ya giden
          personel Mustafa Fa'nın personeli.
          Ancak bunlara ilaveten Kütahya'da 1
          personelimiz daha var sürekli orda
          görev yapan, bu personelimiz de
          Mustafa FA'nın personeli olarak
          gözükecek ve Kütahya'daki personel
          sıralaması bu şekilde olacak.`}
        </p>
      </aside>

      <PenMarks />
      <Taskbar />
    </div>
  );
};

export default App;
